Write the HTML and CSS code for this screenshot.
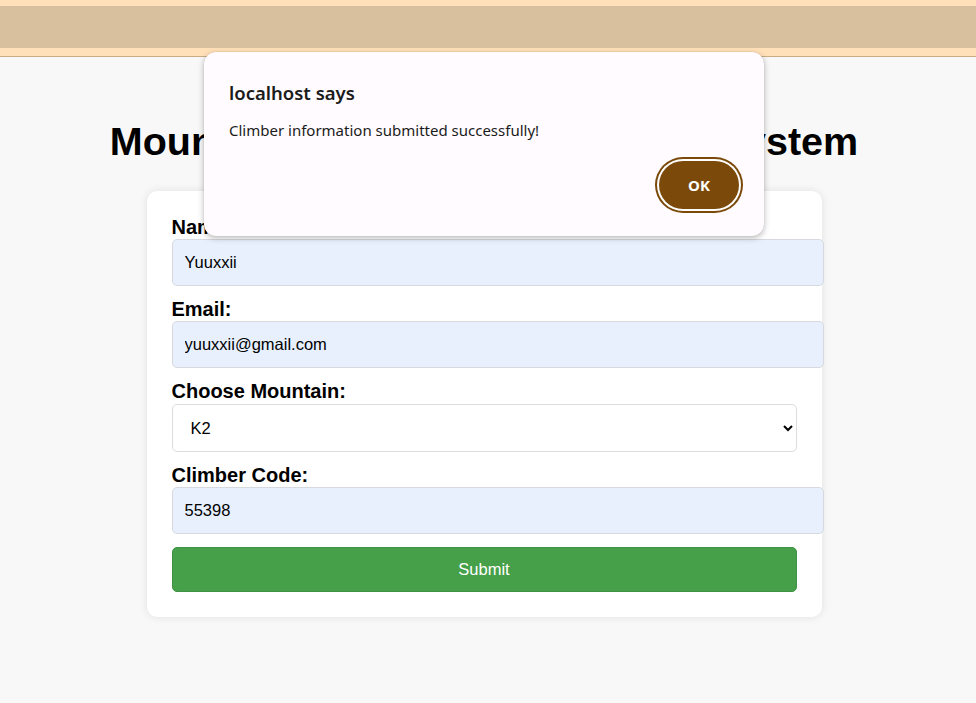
FILE: index.html
```html
<!DOCTYPE html>
<html lang="en">
<head>
<meta charset="utf-8">
<title>Mountain Climbing Registration System</title>
<link rel="stylesheet" href="styles.css">
</head>
<body>
<header class="topbar"><div class="topbar-inner"></div></header>
<main class="page">
  <h1 class="title">Mountain Climbing Registration System</h1>
  <form class="card">
    <label class="field-label" for="name">Name:</label>
    <input class="text-input" id="name" type="text" value="Yuuxxii">
    <label class="field-label" for="email">Email:</label>
    <input class="text-input" id="email" type="email" value="yuuxxii@gmail.com">
    <label class="field-label" for="mountain">Choose Mountain:</label>
    <select class="select-input" id="mountain">
      <option>K2</option>
    </select>
    <label class="field-label" for="code">Climber Code:</label>
    <input class="text-input" id="code" type="text" value="55398">
    <button class="submit-btn" type="button">Submit</button>
  </form>
</main>
<div class="alert" role="alertdialog">
  <div class="alert-title">localhost says</div>
  <div class="alert-msg">Climber information submitted successfully!</div>
  <div class="alert-actions"><button class="alert-ok" type="button">OK</button></div>
</div>
</body>
</html>
```
FILE: styles.css
```css
html, body {
  margin: 0;
  padding: 0;
}
body {
  background: #f8f8f8;
  font-family: "Liberation Sans", Arial, sans-serif;
  color: #000;
  height: 703px;
  overflow: hidden;
}
.topbar {
  background: #ffe0b8;
  padding: 6px 0 8px;
  border-bottom: 1px solid #c9aa84;
}
.topbar-inner {
  background: #d8c09e;
  height: 42px;
}
.page {
  padding: 62px 8px 0 0;
}
.title {
  margin: 0 0 27px;
  text-align: center;
  font-size: 39.5px;
  font-weight: bold;
  line-height: 45px;
}
.card {
  width: 625px;
  margin: 0 auto;
  padding: 25px;
  background: #fff;
  border-radius: 10px;
  box-shadow: 0 0 8px rgba(0,0,0,0.1);
  display: flex;
  flex-direction: column;
  align-items: flex-start;
}
.field-label {
  display: block;
  font-size: 20px;
  font-weight: bold;
  line-height: 23px;
  margin: 0;
}
.text-input {
  box-sizing: content-box;
  width: 100%;
  height: 21px;
  padding: 12px 13px 12px 12px;
  margin: 0 0 12px;
  border: 1px solid #d6dae0;
  border-radius: 5px;
  background: #e8f0fe;
  font-family: "Liberation Sans", Arial, sans-serif;
  font-size: 16.5px;
  color: #000;
  outline: none;
}
.select-input {
  box-sizing: border-box;
  width: 100%;
  height: 48px;
  padding: 0 10px 0 14px;
  margin: 1px 0 12px;
  border: 1px solid #dcdcdc;
  border-radius: 5px;
  background: #fff;
  font-family: "Liberation Sans", Arial, sans-serif;
  font-size: 16.5px;
  color: #000;
}
.submit-btn {
  width: 100%;
  height: 45px;
  margin-top: 1px;
  border: 1px solid #3f9243;
  border-radius: 5px;
  background: #46a049;
  color: #fff;
  font-family: "Liberation Sans", Arial, sans-serif;
  font-size: 16.5px;
}
.alert {
  position: absolute;
  left: 204px;
  top: 52px;
  width: 560px;
  height: 184px;
  box-sizing: border-box;
  padding: 29px 25px 0;
  background: #fffbfe;
  border-radius: 12px;
  box-shadow: 0 2px 6px rgba(0,0,0,0.28), 0 0 1px rgba(0,0,0,0.2);
  font-family: "Noto Sans", "Open Sans", sans-serif;
  color: #1b1b1b;
}
.alert-title {
  font-size: 18.5px;
  font-weight: 600;
  line-height: 24px;
}
.alert-msg {
  margin-top: 15px;
  font-size: 15px;
  line-height: 20px;
}
.alert-actions {
  display: flex;
  justify-content: flex-end;
  margin-top: 21px;
}
.alert-ok {
  width: 80px;
  height: 48px;
  border: none;
  border-radius: 24px;
  background: #7b4a0b;
  color: #fff;
  font-family: "Noto Sans", "Open Sans", sans-serif;
  font-size: 15px;
  font-weight: 700;
  box-shadow: 0 0 0 2px #fff, 0 0 0 4px #7b4a0b;
}
```
